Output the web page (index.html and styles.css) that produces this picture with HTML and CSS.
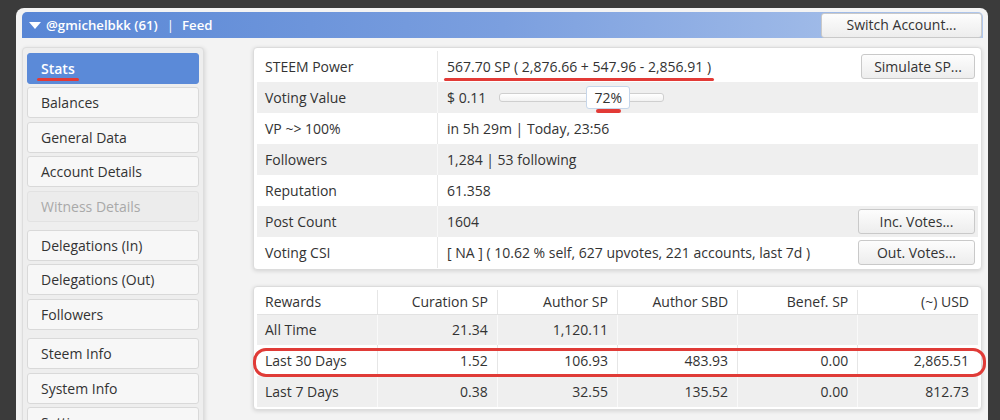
FILE: index.html
```html
<!DOCTYPE html>
<html>
<head>
<meta charset="utf-8">
<link rel="stylesheet" href="styles.css">
</head>
<body>
<div class="window">
  <div class="header">
    <div class="title">
      <svg class="tri" width="12" height="8" viewBox="0 0 12 8"><path d="M0 0 L12 0 L6 7 Z" fill="#fff"/></svg>
      <span>@gmichelbkk (61)</span><span class="sep">|</span><span>Feed</span>
    </div>
    <button class="btn btn-switch">Switch Account...</button>
  </div>
  <div class="main">
    <nav class="nav">
      <div class="group">
        <div class="item active"><span class="mark">Stats</span></div>
        <div class="item">Balances</div>
        <div class="item">General Data</div>
        <div class="item">Account Details</div>
        <div class="item disabled">Witness Details</div>
      </div>
      <div class="group">
        <div class="item">Delegations (In)</div>
        <div class="item">Delegations (Out)</div>
        <div class="item">Followers</div>
      </div>
      <div class="group">
        <div class="item">Steem Info</div>
        <div class="item">System Info</div>
        <div class="item">Settings</div>
      </div>
    </nav>
    <div class="content">
      <div class="card stats">
        <div class="row">
          <div class="label">STEEM Power</div>
          <div class="value"><span class="mark mark-sp">567.70 SP ( 2,876.66 + 547.96 - 2,856.91 )</span><button class="btn btn-sim">Simulate SP...</button></div>
        </div>
        <div class="row alt">
          <div class="label">Voting Value</div>
          <div class="value"><span>$ 0.11</span>
            <div class="slider"><div class="thumb"><span class="mark mark-pct">72%</span></div></div>
          </div>
        </div>
        <div class="row">
          <div class="label">VP ~&gt; 100%</div>
          <div class="value">in 5h 29m | Today, 23:56</div>
        </div>
        <div class="row alt">
          <div class="label">Followers</div>
          <div class="value">1,284 | 53 following</div>
        </div>
        <div class="row">
          <div class="label">Reputation</div>
          <div class="value">61.358</div>
        </div>
        <div class="row alt">
          <div class="label">Post Count</div>
          <div class="value"><span>1604</span><button class="btn btn-votes">Inc. Votes...</button></div>
        </div>
        <div class="row">
          <div class="label">Voting CSI</div>
          <div class="value"><span>[ NA ] ( 10.62 % self, 627 upvotes, 221 accounts, last 7d )</span><button class="btn btn-votes">Out. Votes...</button></div>
        </div>
      </div>
      <div class="card rewards">
        <table>
          <thead>
            <tr><th class="first">Rewards</th><th>Curation SP</th><th>Author SP</th><th>Author SBD</th><th>Benef. SP</th><th>(~) USD</th></tr>
          </thead>
          <tbody>
            <tr class="alt"><td class="first">All Time</td><td>21.34</td><td>1,120.11</td><td></td><td></td><td></td></tr>
            <tr><td class="first">Last 30 Days</td><td>1.52</td><td>106.93</td><td>483.93</td><td>0.00</td><td>2,865.51</td></tr>
            <tr class="alt"><td class="first">Last 7 Days</td><td>0.38</td><td>32.55</td><td>135.52</td><td>0.00</td><td>812.73</td></tr>
          </tbody>
        </table>
        <div class="highlight"></div>
      </div>
    </div>
  </div>
</div>
</body>
</html>
```
FILE: styles.css
```css
* { box-sizing: border-box; }
html, body { margin: 0; padding: 0; }
body {
  background: #3b3b3b;
  font-family: "Open Sans", "Noto Sans", sans-serif;
  font-size: 14px;
  color: #333;
  width: 1000px;
  height: 420px;
  overflow: hidden;
}
.window {
  margin: 8px 0 0 16px;
  width: 972px;
  height: 420px;
  background: #f3f3f3;
  border-radius: 8px 8px 0 0;
  padding: 4px 5px 0 6px;
}
.header {
  height: 26px;
  border-radius: 5px 5px 0 0;
  background: linear-gradient(to right, #5886d5 0%, #7b9fdf 50%, #b0c7ec 100%);
  display: flex;
  align-items: center;
  justify-content: space-between;
  padding-left: 7px;
}
.title {
  color: #fff;
  font-weight: 600;
  font-size: 13.2px;
  display: flex;
  align-items: center;
}
.tri { margin-right: 5px; margin-top: 1px; }
.sep { margin: 0 8px 0 9px; font-weight: 400; }
.btn {
  font-family: "Open Sans", "Noto Sans", sans-serif;
  font-size: 14px;
  color: #333;
  background: linear-gradient(#fdfdfd, #ededed);
  border: 1px solid #c9c9c9;
  border-radius: 3px;
  height: 25px;
  padding: 0;
  line-height: 22px;
}
.btn-switch { width: 161px; height: 25px; margin-right: 1px; }
.btn-sim { width: 114px; }
.btn-votes { width: 117px; }
.main {
  display: flex;
  margin-top: 9px;
  gap: 49px;
}
.nav {
  width: 182px;
  flex: none;
  background: #eeeeee;
  border: 1px solid #dddddd;
  border-radius: 4px;
  padding: 5px 4px 0;
  box-shadow: 1px 1px 4px rgba(0,0,0,0.12);
  height: 380px;
}
.group { display: flex; flex-direction: column; gap: 3.4px; }
.group + .group { margin-top: 8.5px; }
.item {
  height: 31px;
  background: #f7f7f7;
  border: 1px solid #d9d9d9;
  border-radius: 3px;
  padding-left: 13px;
  display: flex;
  align-items: center;
  color: #333;
}
.item.active {
  background: #5b8ad8;
  border-color: #5b8ad8;
  color: #fff;
  font-weight: 600;
}
.item.disabled {
  background: #ececec;
  border-color: #e2e2e2;
  color: #a9a9a9;
}
.content { width: 729px; flex: none; }
.card {
  background: #fff;
  border: 1px solid #dcdcdc;
  border-radius: 4px;
  box-shadow: 0 1px 4px rgba(0,0,0,0.14);
  padding: 3px 3px 1px;
  position: relative;
}
.row {
  display: grid;
  grid-template-columns: 181px 1fr;
  height: 31px;
  background: #fff;
}
.row.alt { background: #efefef; }
.label {
  padding-left: 8px;
  display: flex;
  align-items: center;
  border-right: 1px solid #e8e8e8;
}
.row.alt .label { border-right-color: #f8f8f8; }
.value {
  padding-left: 9px;
  padding-right: 3px;
  display: flex;
  align-items: center;
  justify-content: space-between;
}
.value .btn { margin-left: auto; }
.mark { position: relative; }
.mark::after {
  content: "";
  position: absolute;
  background: #e23a36;
  border-radius: 3px;
}
.item .mark::after { left: -4px; right: -4px; bottom: -3px; height: 3px; }
.mark-sp::after { left: -3px; right: -3px; bottom: -5px; height: 3px; }
.mark-pct::after { left: 1px; right: 1px; bottom: -6px; height: 4px; }
.slider {
  position: relative;
  margin-left: 13px;
  margin-right: auto;
  width: 165px;
  height: 9px;
  border: 1px solid #cfcfcf;
  border-radius: 3px;
  background: linear-gradient(#ffffff, #f2f2f2);
}
.thumb {
  position: absolute;
  left: 86px;
  top: -8px;
  width: 44px;
  height: 23px;
  border: 1px solid #c6d6ea;
  border-radius: 3px;
  background: #fff;
  display: flex;
  align-items: center;
  justify-content: center;
}
.rewards { margin-top: 16px; padding-bottom: 2px; }
table {
  width: 100%;
  border-collapse: collapse;
  table-layout: fixed;
}
th, td {
  font-weight: 400;
  text-align: right;
  padding: 0 9px 0 8px;
  border-right: 1px solid #e6e6e6;
}
th:last-child, td:last-child { border-right: none; }
th { height: 24px; border-bottom: 1px solid #e2e2e2; }
td { height: 31px; }
tr.alt td { background: #efefef; border-right-color: #f9f9f9; }
.first { text-align: left; }
.highlight {
  position: absolute;
  left: -1px;
  top: 61px;
  width: 733px;
  height: 29px;
  border: 3px solid #e03b37;
  border-radius: 13px;
}
```
